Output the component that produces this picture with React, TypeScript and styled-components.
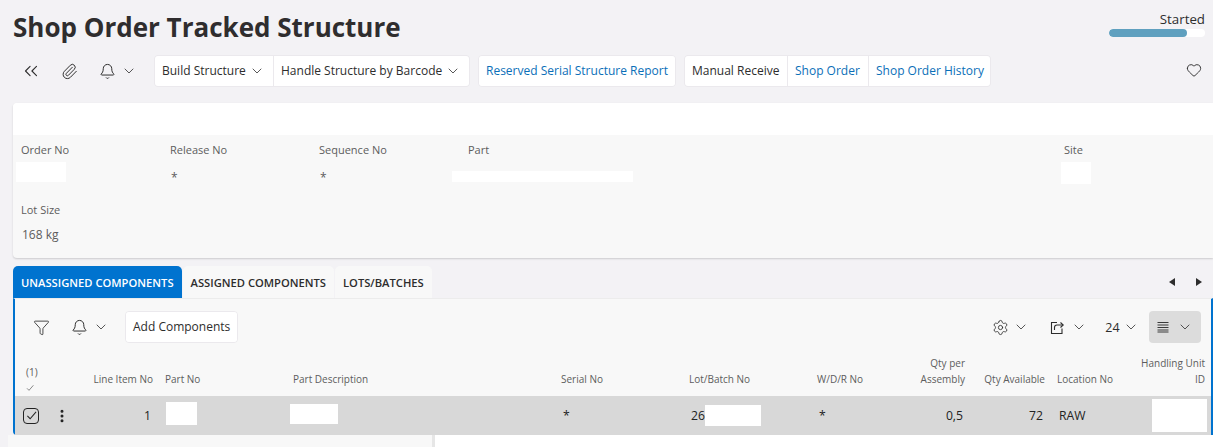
import React from 'react';
import styled, { createGlobalStyle } from 'styled-components';
import {
  Bell,
  ChevronDown,
  ChevronsLeft,
  EllipsisVertical,
  Funnel,
  Heart,
  Paperclip,
  Settings,
} from 'lucide-react';

const GlobalStyle = createGlobalStyle`
  html, body {
    margin: 0;
    padding: 0;
    height: 447px;
    overflow: hidden;
    background: #f3f2f5;
    font-family: "Open Sans", "Liberation Sans", sans-serif;
    color: #2d2d2d;
  }
  * { box-sizing: border-box; }
`;

const Page = styled.div`
  display: flex;
  flex-direction: column;
  width: 1213px;
  height: 447px;
  overflow: hidden;
  padding-left: 13px;
`;

const Header = styled.header`
  display: flex;
  justify-content: space-between;
  height: 55px;
  padding: 11px 8px 0 0;
`;

const Title = styled.h1`
  margin: 0;
  font-size: 26px;
  line-height: 33px;
  font-weight: 700;
  color: #2f2d2e;
`;

const Status = styled.div`
  display: flex;
  flex-direction: column;
  align-items: flex-end;
  width: 96px;
`;

const StatusLabel = styled.span`
  font-size: 13.3px;
  line-height: 17px;
`;

const Progress = styled.div`
  width: 100%;
  height: 8px;
  margin-top: 1px;
  border-radius: 4px;
  background: #fff;
  overflow: hidden;
`;

const ProgressFill = styled.div`
  height: 100%;
  border-radius: 4px;
  background: #5fa0bf;
`;

const Toolbar = styled.div`
  display: flex;
  align-items: center;
  height: 32px;
`;

const IconSlot = styled.span<{ $width: number; $ml?: number }>`
  display: inline-flex;
  align-items: center;
  justify-content: center;
  flex: none;
  width: ${(p) => p.$width}px;
  margin-left: ${(p) => p.$ml ?? 0}px;
  color: #2d2d2d;

  svg {
    flex: none;
  }
`;

const HeartSlot = styled(IconSlot)`
  padding-bottom: 3px;
`;

const ButtonGroup = styled.div<{ $gapLeft?: number }>`
  display: flex;
  height: 32px;
  margin-left: ${(p) => p.$gapLeft ?? 0}px;
  border: 1px solid #ebe9ed;
  border-radius: 4px;
  background: #ebe9ed;
  gap: 1px;
  overflow: hidden;
`;

const ToolButton = styled.button<{ $link?: boolean; $width: number }>`
  display: flex;
  align-items: center;
  justify-content: space-between;
  width: ${(p) => p.$width}px;
  padding: 0 8px 1px 7px;
  border: 0;
  background: #fff;
  font: inherit;
  font-size: 12px;
  white-space: nowrap;
  color: ${(p) => (p.$link ? '#0b6fb8' : '#2d2d2d')};
`;

const Spacer = styled.div`
  flex: 1;
`;

const InfoCard = styled.section`
  height: 155px;
  margin-top: 16px;
  border-radius: 4px 0 0 4px;
  background: #f8f8f8;
  box-shadow: 0 1px 2px rgba(0, 0, 0, 0.16);
  overflow: hidden;
`;

const InfoBanner = styled.div`
  height: 32px;
  background: #fff;
`;

const FieldRow = styled.div`
  display: grid;
  grid-template-columns: 149px 149px 149px 596px 1fr;
  height: 60px;
  padding: 7px 0 0 8px;
`;

const Field = styled.div`
  display: flex;
  flex-direction: column;
  min-width: 0;
`;

const FieldLabel = styled.span`
  font-size: 11px;
  line-height: 16px;
  color: #5d5d5d;
`;

const FieldValue = styled.div`
  display: flex;
  align-items: center;
  height: 24px;
  margin-top: 4px;
  padding-left: 1px;
  font-size: 12px;
  color: #5d5d5d;
`;

const Star = styled.span`
  padding-top: 6px;
`;

const Redacted = styled.div<{ $w: number; $h: number; $shift?: number; $top?: number; $pull?: number }>`
  flex: none;
  width: ${(p) => p.$w}px;
  height: ${(p) => p.$h}px;
  margin-left: ${(p) => p.$shift ?? 0}px;
  margin-right: ${(p) => p.$pull ?? 0}px;
  margin-top: ${(p) => p.$top ?? 0}px;
  background: #fff;
`;

const TabRow = styled.div`
  display: flex;
  align-items: stretch;
  height: 32px;
  margin-top: 8px;
  gap: 1px;
`;

const Tab = styled.div<{ $active?: boolean }>`
  display: flex;
  align-items: center;
  padding: 0 8px;
  border-radius: 5px 5px 0 0;
  font-size: 11.2px;
  font-weight: 600;
  text-transform: uppercase;
  white-space: nowrap;
  color: ${(p) => (p.$active ? '#fff' : '#2d2d2d')};
  background: ${(p) => (p.$active ? '#0073cf' : '#f8f8f8')};
`;

const TabArrows = styled.div`
  display: flex;
  align-items: center;
  gap: 21px;
  padding-right: 11px;
  margin-left: auto;
`;

const Arrow = styled.span<{ $dir: 'left' | 'right' }>`
  width: 0;
  height: 0;
  border-top: 4.5px solid transparent;
  border-bottom: 4.5px solid transparent;
  ${(p) =>
    p.$dir === 'left'
      ? 'border-right: 6px solid #2d2d2d;'
      : 'border-left: 6px solid #2d2d2d;'}
`;

const Panel = styled.section`
  height: 137px;
  border: solid #0073cf;
  border-width: 0 2px 0 2px;
  border-top: 1px solid #ececec;
  border-radius: 0 0 0 4px;
  background: #f8f8f8;
`;

const PanelBar = styled.div`
  display: flex;
  align-items: center;
  height: 32px;
  margin-top: 12px;
`;

const PlainGroup = styled.div`
  display: flex;
  align-items: center;
  margin-left: auto;
  font-size: 12.5px;
`;

const ViewToggle = styled.div`
  display: flex;
  align-items: center;
  justify-content: center;
  gap: 8px;
  width: 52px;
  height: 32px;
  margin: 0 10px 0 11px;
  border-radius: 4px;
  background: #dcdcdc;
`;

const columns = '40px 20px 84px 128px 268px 128px 128px 84px 76px 80px 80px 80px';

const HeadRow = styled.div`
  display: grid;
  grid-template-columns: ${columns};
  height: 53px;
  align-items: end;
  font-size: 10px;
  line-height: 16px;
  color: #5d5d5d;
`;

const HeadCell = styled.div<{ $right?: boolean }>`
  padding: 0 6px 9px;
  text-align: ${(p) => (p.$right ? 'right' : 'left')};
  white-space: pre-line;
`;

const SelectHead = styled.div`
  display: flex;
  flex-direction: column;
  align-items: flex-start;
  gap: 5px;
  padding: 0 0 4px 11px;
  line-height: 13px;
`;

const DataRow = styled.div`
  display: grid;
  grid-template-columns: ${columns};
  height: 39px;
  align-items: center;
  font-size: 12.2px;
  background: #d8d8d8;
  color: #222;
`;

const Cell = styled.div<{ $right?: boolean }>`
  display: flex;
  align-items: center;
  justify-content: ${(p) => (p.$right ? 'flex-end' : 'flex-start')};
  padding: 0 8px;
`;

const DotsCell = styled.div`
  display: flex;
  align-items: center;
  margin-left: -1px;
`;

const Checkbox = styled.div`
  display: flex;
  align-items: center;
  justify-content: center;
  width: 16px;
  height: 16px;
  margin-left: 8px;
  border: 1px solid #222;
  border-radius: 4px;
`;

const Footer = styled.div`
  display: flex;
  height: 12px;
  margin-left: -5px;
`;

const FooterLeft = styled.div`
  width: 427px;
  background: #f8f8f8;
  border-right: 3px solid #e6e6e6;
`;

const FooterRight = styled.div`
  flex: 1;
  background: #fff;
`;

const Chevron = () => <ChevronDown size={16} strokeWidth={1.2} />;

const ExportIcon = () => (
  <svg width="15" height="15" viewBox="0 0 15 15" fill="none" stroke="#2d2d2d" strokeWidth="1.1">
    <path d="M7 2.5H1.5V13.5H12V8.5" />
    <path d="M4.5 10V7.5C4.5 6 5.5 5 7 5H13" />
    <path d="M10.5 2.5L13.2 5L10.5 7.5" />
  </svg>
);

const DensityIcon = () => (
  <svg width="12" height="12" viewBox="0 0 12 12" fill="none" stroke="#3a3a3a" strokeWidth="1">
    <path d="M0.5 1.5H11.5M0.5 4H11.5M0.5 6.5H11.5M0.5 9H11.5M0.5 11H11.5" />
  </svg>
);

const CheckMark = ({ size }: { size: number }) => (
  <svg width={size} height={size} viewBox="0 0 12 12" fill="none" stroke="currentColor" strokeWidth="1.1">
    <path d="M1.5 6.5L4.5 9.5L11 2" />
  </svg>
);

export default function App() {
  return (
    <Page>
      <GlobalStyle />
      <Header>
        <Title>Shop Order Tracked Structure</Title>
        <Status>
          <StatusLabel>Started</StatusLabel>
          <Progress>
            <ProgressFill style={{ width: '81%' }} />
          </Progress>
        </Status>
      </Header>

      <Toolbar>
        <IconSlot $width={36}>
          <ChevronsLeft size={22} strokeWidth={1.2} />
        </IconSlot>
        <IconSlot $width={41}>
          <Paperclip size={17} strokeWidth={1.4} />
        </IconSlot>
        <IconSlot $width={34}>
          <Bell size={17} strokeWidth={1.4} />
        </IconSlot>
        <IconSlot $width={10}>
          <Chevron />
        </IconSlot>
        <ButtonGroup $gapLeft={20}>
          <ToolButton $width={118}>
            Build Structure <Chevron />
          </ToolButton>
          <ToolButton $width={195}>
            Handle Structure by Barcode <Chevron />
          </ToolButton>
        </ButtonGroup>
        <ButtonGroup $gapLeft={8}>
          <ToolButton $link $width={196}>
            Reserved Serial Structure Report
          </ToolButton>
        </ButtonGroup>
        <ButtonGroup $gapLeft={8}>
          <ToolButton $width={102}>Manual Receive</ToolButton>
          <ToolButton $link $width={80}>
            Shop Order
          </ToolButton>
          <ToolButton $link $width={121}>
            Shop Order History
          </ToolButton>
        </ButtonGroup>
        <Spacer />
        <HeartSlot $width={38}>
          <Heart size={16} strokeWidth={1.4} />
        </HeartSlot>
      </Toolbar>

      <InfoCard>
        <InfoBanner />
        <FieldRow>
          <Field>
            <FieldLabel>Order No</FieldLabel>
            <FieldValue>
              <Redacted $w={50} $h={20} $shift={-6} $top={-4} />
            </FieldValue>
          </Field>
          <Field>
            <FieldLabel>Release No</FieldLabel>
            <FieldValue>
              <Star>*</Star>
            </FieldValue>
          </Field>
          <Field>
            <FieldLabel>Sequence No</FieldLabel>
            <FieldValue>
              <Star>*</Star>
            </FieldValue>
          </Field>
          <Field>
            <FieldLabel>Part</FieldLabel>
            <FieldValue>
              <Redacted $w={181} $h={11} $shift={-17} $top={5} />
            </FieldValue>
          </Field>
          <Field>
            <FieldLabel>Site</FieldLabel>
            <FieldValue>
              <Redacted $w={30} $h={22} $shift={-4} $top={-2} />
            </FieldValue>
          </Field>
        </FieldRow>
        <FieldRow>
          <Field>
            <FieldLabel>Lot Size</FieldLabel>
            <FieldValue>168 kg</FieldValue>
          </Field>
        </FieldRow>
      </InfoCard>

      <TabRow>
        <Tab $active>Unassigned Components</Tab>
        <Tab>Assigned Components</Tab>
        <Tab>Lots/Batches</Tab>
        <TabArrows>
          <Arrow $dir="left" />
          <Arrow $dir="right" />
        </TabArrows>
      </TabRow>

      <Panel>
        <PanelBar>
          <IconSlot $width={52}>
            <Funnel size={17} strokeWidth={1.2} />
          </IconSlot>
          <IconSlot $width={24}>
            <Bell size={17} strokeWidth={1.4} />
          </IconSlot>
          <IconSlot $width={20}>
            <Chevron />
          </IconSlot>
          <ButtonGroup $gapLeft={14}>
            <ToolButton $width={111}>Add Components</ToolButton>
          </ButtonGroup>
          <PlainGroup>
            <IconSlot $width={20}>
              <Settings size={17} strokeWidth={1.2} />
            </IconSlot>
            <IconSlot $width={14} $ml={4}>
              <Chevron />
            </IconSlot>
            <IconSlot $width={30} $ml={14}>
              <ExportIcon />
            </IconSlot>
            <IconSlot $width={14}>
              <Chevron />
            </IconSlot>
            <IconSlot $width={23} $ml={15}>
              24
            </IconSlot>
            <IconSlot $width={14}>
              <Chevron />
            </IconSlot>
            <ViewToggle>
              <DensityIcon />
              <Chevron />
            </ViewToggle>
          </PlainGroup>
        </PanelBar>

        <HeadRow>
          <SelectHead>
            (1)
            <CheckMark size={8} />
          </SelectHead>
          <div />
          <HeadCell $right>Line Item No</HeadCell>
          <HeadCell>Part No</HeadCell>
          <HeadCell>Part Description</HeadCell>
          <HeadCell>Serial No</HeadCell>
          <HeadCell>Lot/Batch No</HeadCell>
          <HeadCell>W/D/R No</HeadCell>
          <HeadCell $right>{'Qty per\nAssembly'}</HeadCell>
          <HeadCell $right>Qty Available</HeadCell>
          <HeadCell>Location No</HeadCell>
          <HeadCell $right>{'Handling Unit\nID'}</HeadCell>
        </HeadRow>

        <DataRow>
          <Checkbox>
            <CheckMark size={11} />
          </Checkbox>
          <DotsCell>
            <EllipsisVertical size={16} strokeWidth={2.5} />
          </DotsCell>
          <Cell $right>1</Cell>
          <Cell>
            <Redacted $w={31} $h={23} $shift={-1} $top={-5} />
          </Cell>
          <Cell>
            <Redacted $w={48} $h={20} $shift={-5} $top={-4} />
          </Cell>
          <Cell>*</Cell>
          <Cell>
            26
            <Redacted $w={56} $h={21} />
          </Cell>
          <Cell>*</Cell>
          <Cell $right>0,5</Cell>
          <Cell $right>72</Cell>
          <Cell>RAW</Cell>
          <Cell $right>
            <Redacted $w={55} $h={33} $pull={-4} />
          </Cell>
        </DataRow>
      </Panel>

      <Footer>
        <FooterLeft />
        <FooterRight />
      </Footer>
    </Page>
  );
}
